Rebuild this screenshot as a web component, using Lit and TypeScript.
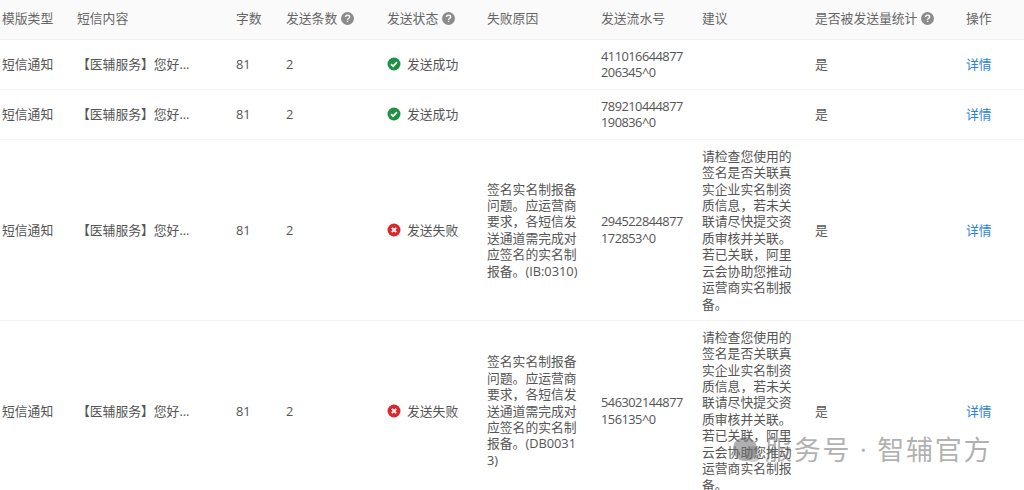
import { LitElement, html, css, svg } from "lit";
import { customElement } from "lit/decorators.js";

const help = html`<svg class="help" viewBox="0 0 12 12"><circle cx="6" cy="6" r="6" fill="#8c8c8c"/><path d="M4.2 4.7c0-1.1.8-1.8 1.9-1.8s1.8.7 1.8 1.6c0 .8-.5 1.2-1 1.5-.5.3-.8.5-.8 1.1" fill="none" stroke="#fff" stroke-width="1.3"/><rect x="5.4" y="8" width="1.3" height="1.3" fill="#fff"/></svg>`;
const ok = html`<svg class="st" viewBox="0 0 14 14"><circle cx="7" cy="7" r="6.5" fill="#1f9142"/><path d="M4 7.2l2.1 2 3.9-4" fill="none" stroke="#fff" stroke-width="1.7"/></svg>`;
const bad = html`<svg class="st" viewBox="0 0 14 14"><circle cx="7" cy="7" r="6.5" fill="#d9292b"/><path d="M4.8 4.8l4.4 4.4M9.2 4.8l-4.4 4.4" fill="none" stroke="#fff" stroke-width="1.8"/></svg>`;

const ADVICE = "请检查您使用的签名是否关联真实企业实名制资质信息\uFF0C若未关联请尽快提交资质审核并关联。若已关联\uFF0C阿里云会协助您推动运营商实名制报备。";
const REASON = "签名实名制报备问题。应运营商要求\uFF0C各短信发送通道需完成对应签名的实名制报备。";

const rows = [
  { ok: true, no: "411016644877206345^0", h: "short" },
  { ok: true, no: "789210444877190836^0", h: "short" },
  { ok: false, code: "(IB:0310)", no: "294522844877172853^0", h: "tall" },
  { ok: false, code: "(DB00313)", no: "546302144877156135^0", h: "tall" },
];

@customElement("app-root")
export class AppRoot extends LitElement {
  static styles = css`
    :host {
      display: block;
      width: 1024px;
      height: 490px;
      overflow: hidden;
      position: relative;
      background: #fff;
      color: #555;
      font: 12.8px/16.4px "Open Sans", "Noto Sans CJK SC", sans-serif;
    }
    .row {
      display: grid;
      grid-template-columns: 75px 159px 50px 101px 100px 114px 101px 113px 151px 60px;
      align-items: center;
      border-bottom: 1px solid #f2f2f2;
      padding-left: 2px;
      box-sizing: border-box;
    }
    .head {
      height: 39.5px;
      padding-bottom: 2px;
      background: #fafafa;
      color: #666;
      border-bottom-color: #f0f0f0;
    }
    .short { height: 50.2px; }
    .tall { height: 181px; }
    .cell { min-width: 0; }
    .wrap { width: 91px; word-break: break-all; }
    .num { width: 85px; letter-spacing: -0.5px; }
    .help { width: 13px; height: 13px; margin-left: 4px; vertical-align: -2px; }
    .status { display: flex; align-items: center; gap: 6px; }
    .st { width: 14px; height: 14px; flex: none; }
    .link { color: #2a85d8; }
    .mark {
      position: absolute;
      left: 732px;
      top: 434px;
      display: flex;
      align-items: center;
      gap: 3px;
      font-size: 27px;
      line-height: 32px;
      letter-spacing: 1.7px;
      color: rgba(110, 110, 110, 0.55);
      white-space: nowrap;
      pointer-events: none;
    }
    .logo { width: 30px; height: 30px; flex: none; }
  `;

  render() {
    return html`
      <div class="row head">
        <div class="cell">模版类型</div>
        <div class="cell">短信内容</div>
        <div class="cell">字数</div>
        <div class="cell">发送条数${help}</div>
        <div class="cell">发送状态${help}</div>
        <div class="cell">失败原因</div>
        <div class="cell">发送流水号</div>
        <div class="cell">建议</div>
        <div class="cell">是否被发送量统计${help}</div>
        <div class="cell">操作</div>
      </div>
      ${rows.map(
        (r) => html`
          <div class="row ${r.h}">
            <div class="cell">短信通知</div>
            <div class="cell">【医辅服务】您好...</div>
            <div class="cell">81</div>
            <div class="cell">2</div>
            <div class="cell status">${r.ok ? ok : bad}<span>${r.ok ? "发送成功" : "发送失败"}</span></div>
            <div class="cell wrap">${r.ok ? "" : REASON + r.code}</div>
            <div class="cell wrap num">${r.no}</div>
            <div class="cell wrap">${r.ok ? "" : ADVICE}</div>
            <div class="cell">是</div>
            <div class="cell link">详情</div>
          </div>
        `
      )}
      <div class="mark">
        <svg class="logo" viewBox="0 0 30 30">
          ${svg`<circle cx="13" cy="14" r="12" fill="rgba(110,110,110,.55)"/><circle cx="21" cy="19" r="8" fill="rgba(110,110,110,.35)"/>`}
        </svg>
        <span>服务号 · 智辅官方</span>
      </div>
    `;
  }
}
